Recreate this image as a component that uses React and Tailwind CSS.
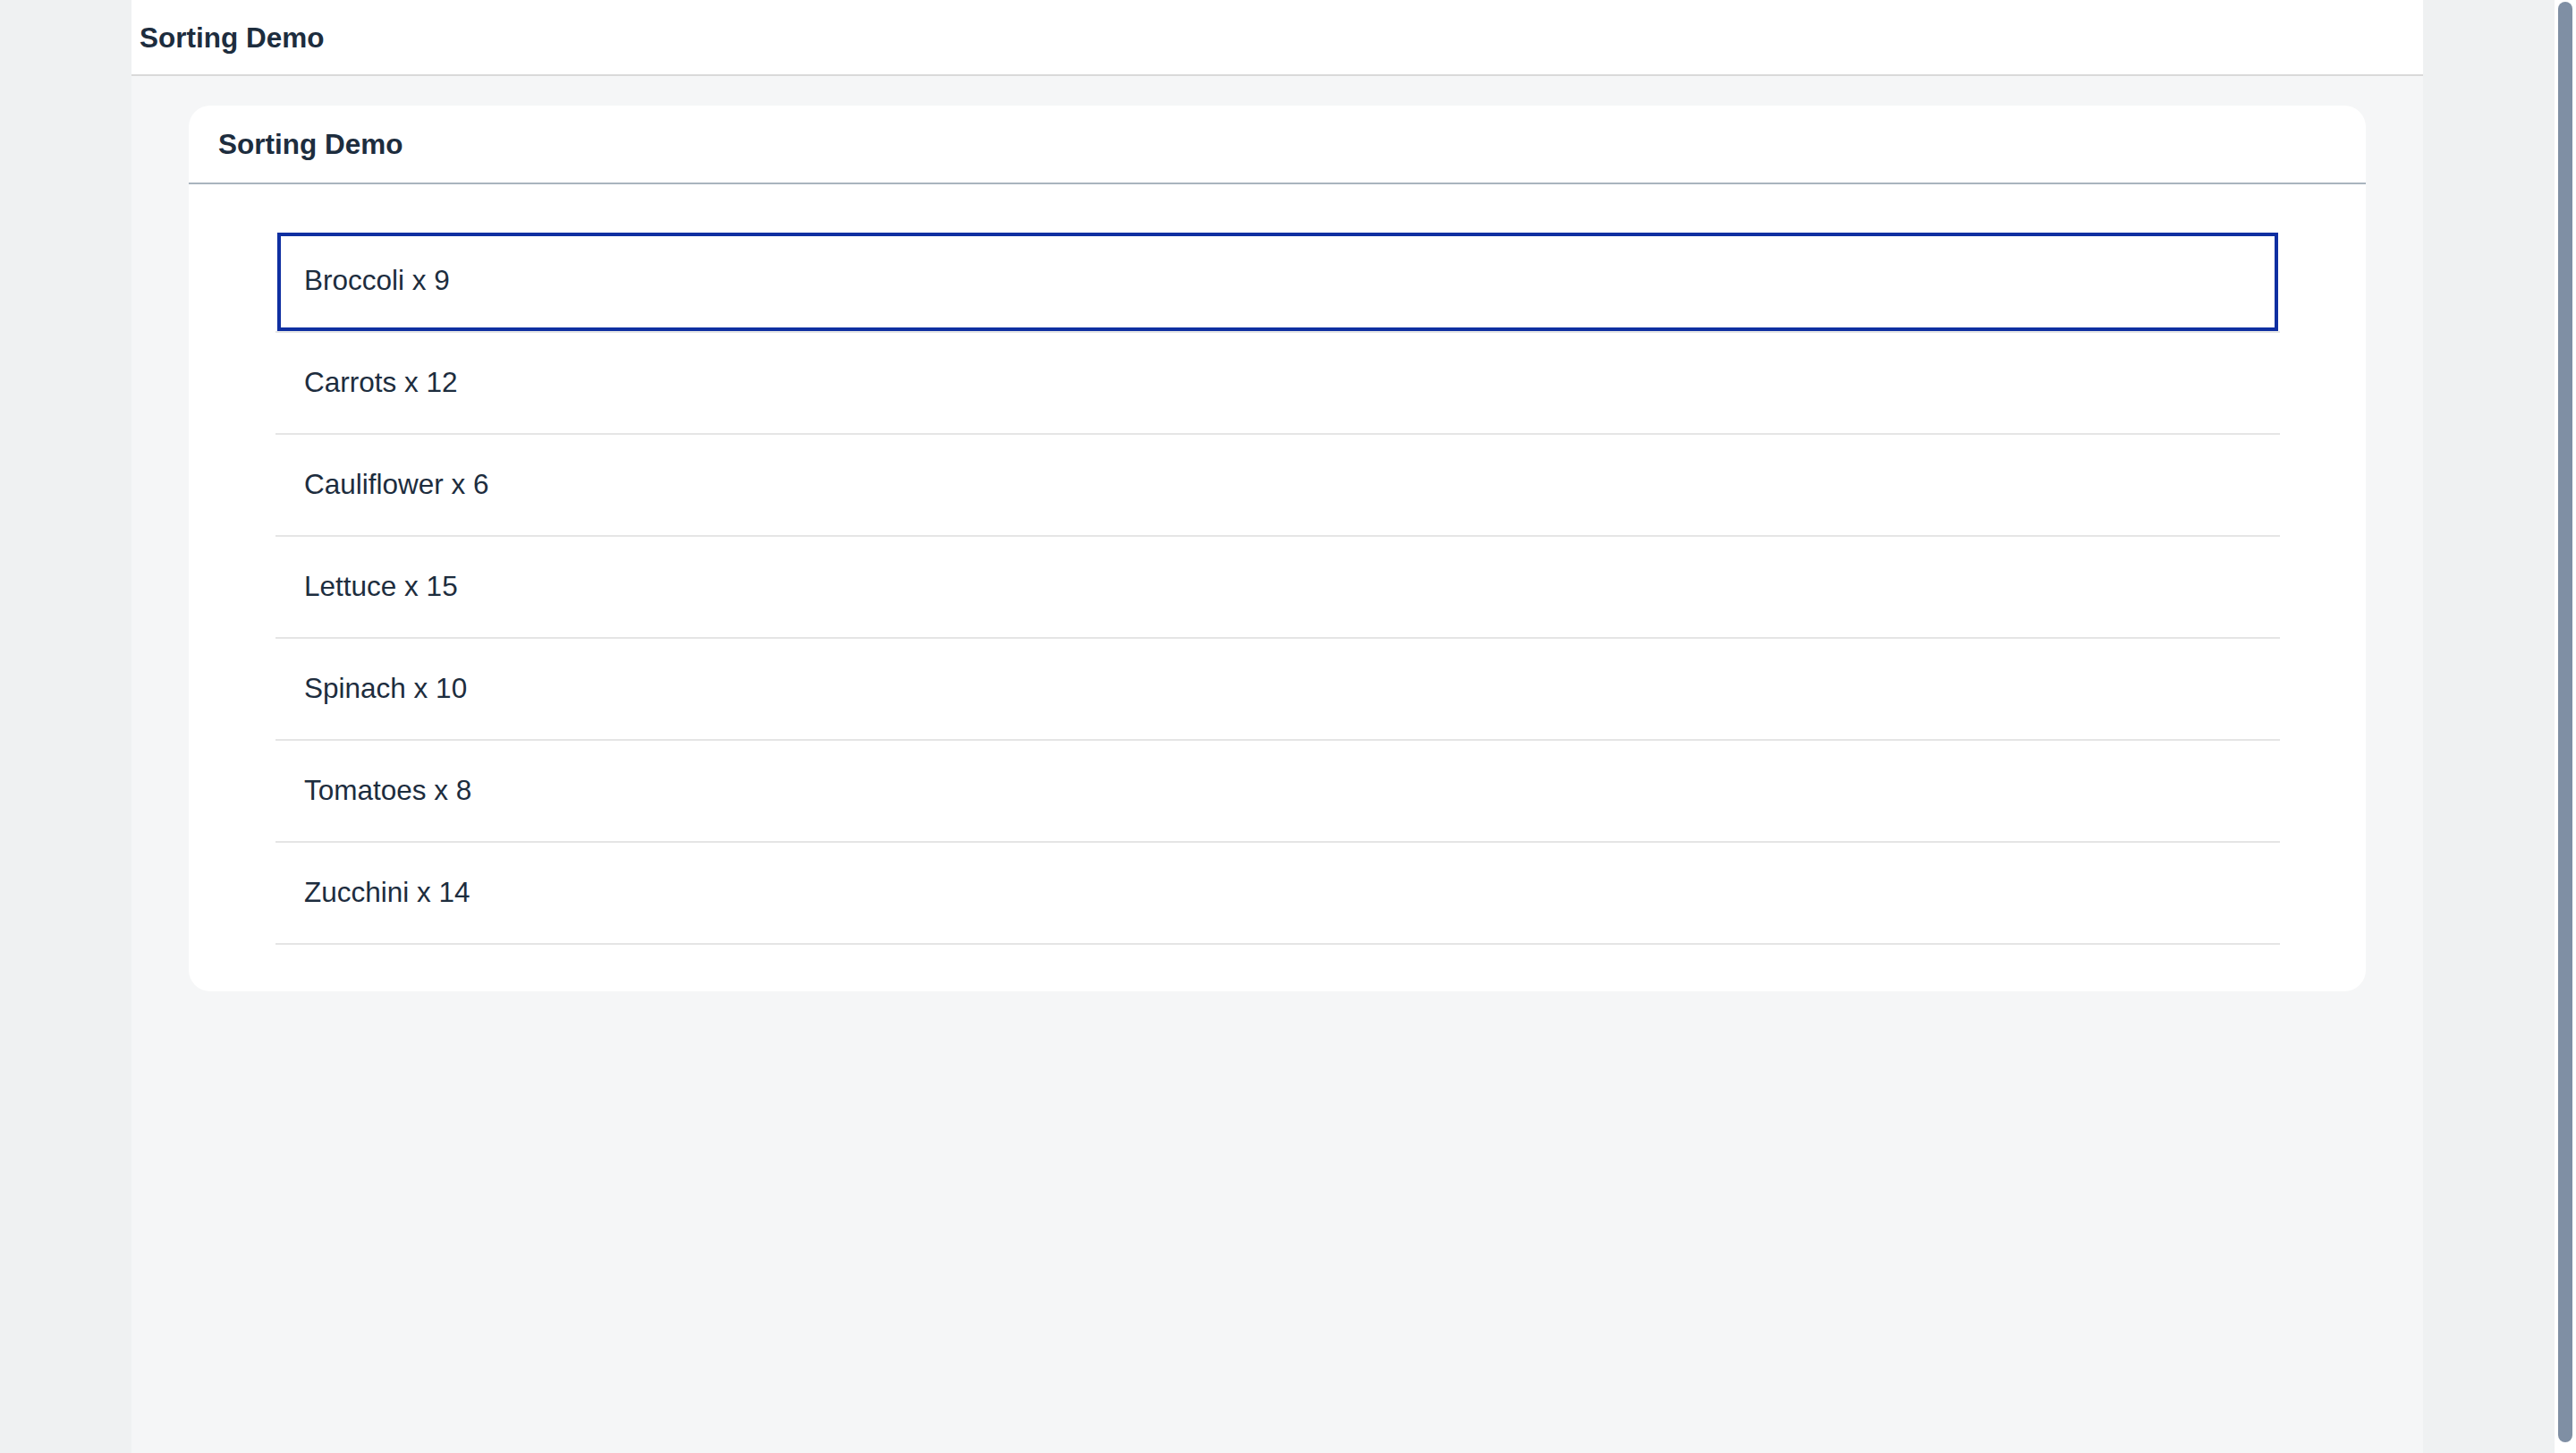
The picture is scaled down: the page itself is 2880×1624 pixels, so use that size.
import React from 'react';

const items = [
  { name: 'Broccoli', qty: 9 },
  { name: 'Carrots', qty: 12 },
  { name: 'Cauliflower', qty: 6 },
  { name: 'Lettuce', qty: 15 },
  { name: 'Spinach', qty: 10 },
  { name: 'Tomatoes', qty: 8 },
  { name: 'Zucchini', qty: 14 },
];

const App = () => {
  return (
    <div
      className="flex h-[1624px] w-full bg-[#eff1f2] text-[#1d2d3e]"
      style={{ fontFamily: '"Liberation Sans", Arial, sans-serif' }}
    >
      <div className="flex-1 flex justify-center">
        <div className="w-[2562px] bg-[#f5f6f7] flex flex-col">
          <header className="h-[85px] shrink-0 bg-white border-b-2 border-[#d9d9d9] flex items-center pl-[9px] pt-[2px]">
            <span className="text-[31.5px] font-bold">Sorting Demo</span>
          </header>

          <div className="px-16 pt-[33px]">
            <div className="bg-white rounded-3xl">
              <div className="h-[88px] flex items-center pl-[33px] pt-[2px] border-b-2 border-[#a9b4be]">
                <span className="text-[31.5px] font-bold">Sorting Demo</span>
              </div>

              <ul className="pl-[97px] pr-24 pt-[52px] pb-[52px]">
                {items.map((item, i) => (
                  <li
                    key={item.name}
                    className={
                      'h-[114px] flex items-center pl-[32px] border-b-2 border-[#e5e5e5] text-[31.5px] ' +
                      (i === 0 ? 'outline-4 outline-[#0f2fa1] outline-offset-[-6px]' : '')
                    }
                  >
                    {item.name} x {item.qty}
                  </li>
                ))}
              </ul>
            </div>
          </div>
        </div>
      </div>

      {/* page scrollbar */}
      <div className="w-6 bg-white px-1 pt-[2px] pb-3">
        <div className="h-full rounded-full bg-[#7f8fa4]" />
      </div>
    </div>
  );
};

export default App;
